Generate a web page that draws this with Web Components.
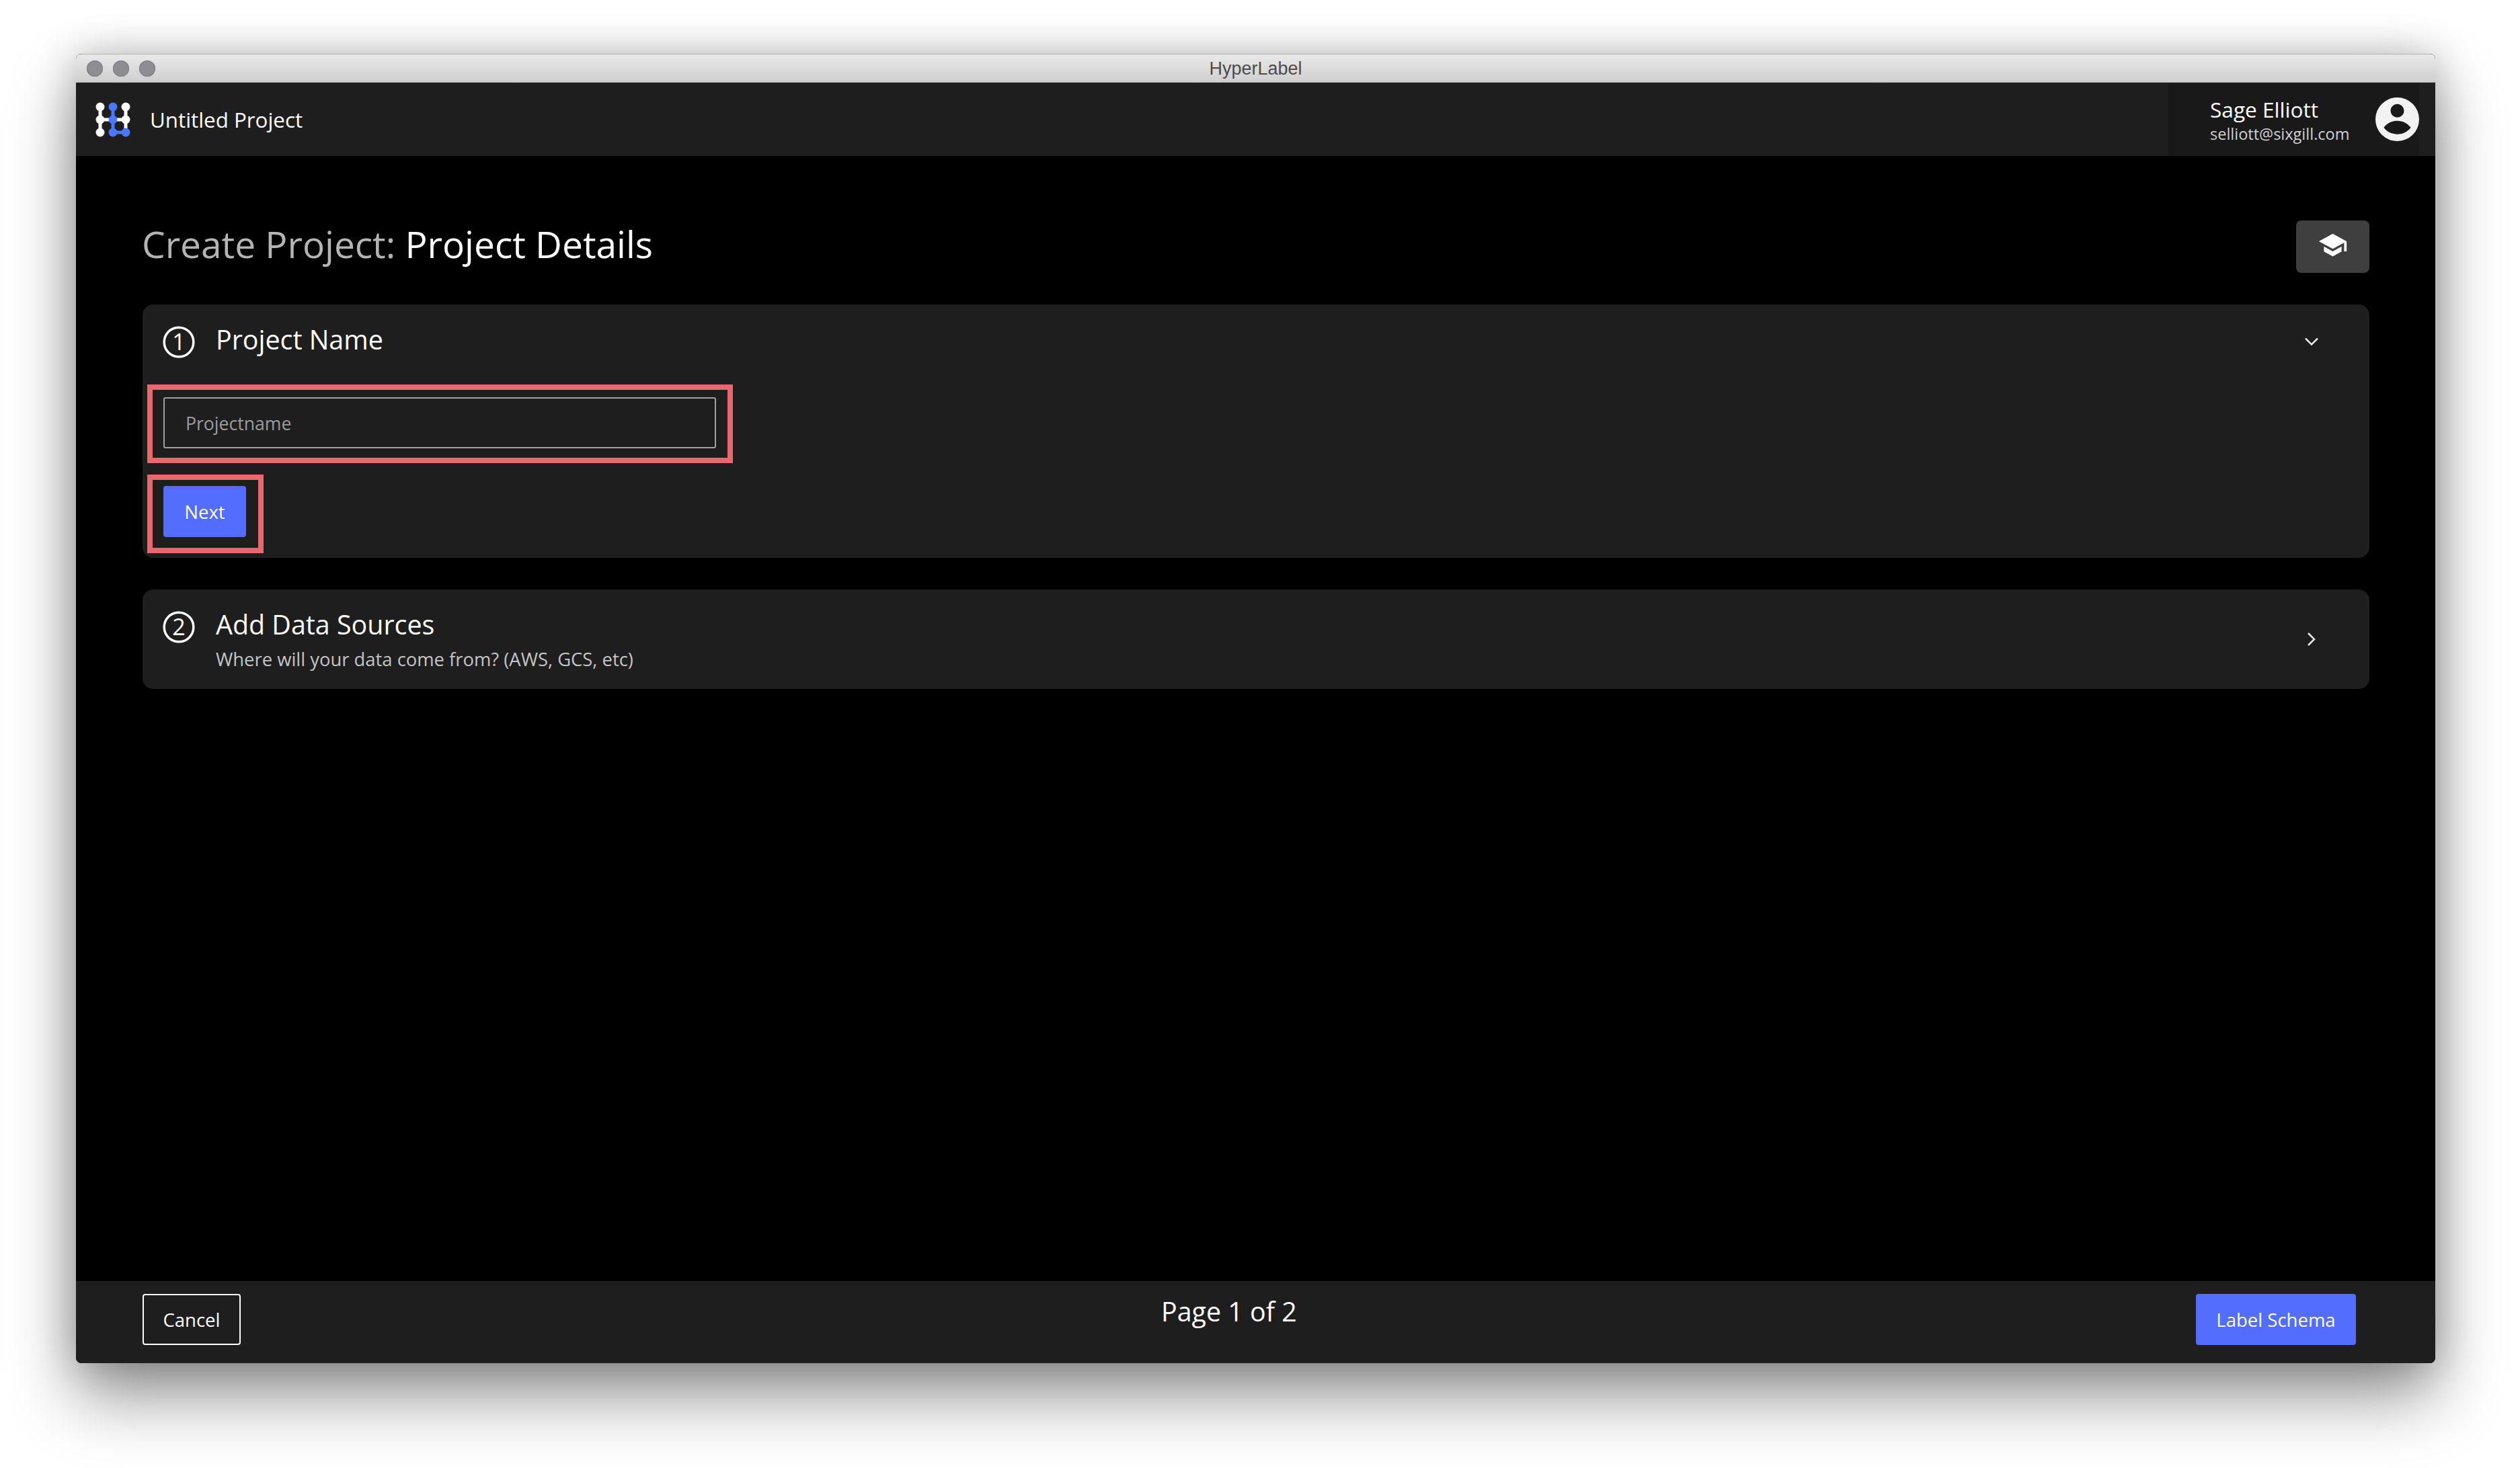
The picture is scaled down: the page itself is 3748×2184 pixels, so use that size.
<!DOCTYPE html>
<html>
<head>
<meta charset="utf-8">
<title>HyperLabel</title>
<style>
  html, body { margin: 0; height: 100%; background: #fff; }
  body { font-family: "Open Sans", "Noto Sans", sans-serif; color: #fff; }
</style>
</head>
<body>
<app-window>
  <title-bar slot="top">HyperLabel</title-bar>
  <app-header slot="top" project="Untitled Project" user="Sage Elliott" email="selliott@sixgill.com"></app-header>
  <page-heading prefix="Create Project:" title="Project Details"></page-heading>
  <step-card step="1" heading="Project Name" open>
    <mark-box pad="11px 17px 14px 16px" style="width:871px">
      <text-field placeholder="Projectname"></text-field>
    </mark-box>
    <mark-box pad="9px 18px 16px 16px" style="width:173px;margin-top:17px">
      <ui-button primary style="width:123px">Next</ui-button>
    </mark-box>
  </step-card>
  <step-card step="2" heading="Add Data Sources" note="Where will your data come from? (AWS, GCS, etc)"></step-card>
  <app-footer slot="bottom" page="Page 1 of 2">
    <ui-button slot="left" style="width:146px">Cancel</ui-button>
    <ui-button slot="right" primary style="width:238px">Label Schema</ui-button>
  </app-footer>
</app-window>

<script>
class AppWindow extends HTMLElement {
  constructor() {
    super();
    this.attachShadow({ mode: "open" });
    this.shadowRoot.innerHTML = `
      <style>
        :host {
          display: flex;
          flex-direction: column;
          box-sizing: border-box;
          width: 3509px;
          height: 1948px;
          margin: 80px 0 0 113px;
          background: #000;
          border-radius: 8px;
          box-shadow: 0 50px 100px rgba(0,0,0,.42), 0 0 60px rgba(0,0,0,.22);
          overflow: hidden;
        }
        main {
          flex: 1;
          display: flex;
          flex-direction: column;
          gap: 47px;
          padding: 96px 98px 0 99px;
        }
      </style>
      <slot name="top"></slot>
      <main><slot></slot></main>
      <slot name="bottom"></slot>
    `;
  }
}

class TitleBar extends HTMLElement {
  constructor() {
    super();
    this.attachShadow({ mode: "open" });
    this.shadowRoot.innerHTML = `
      <style>
        :host {
          display: flex;
          align-items: center;
          position: relative;
          box-sizing: border-box;
          height: 43px;
          padding-left: 16px;
          gap: 15px;
          background: linear-gradient(#e9e9e9, #cfcfcf);
          border-top: 1px solid #b4b4b4;
          border-bottom: 1px solid #a8a8a8;
        }
        i {
          width: 24px;
          height: 24px;
          border-radius: 50%;
          background: #8e8d92;
          box-shadow: inset 0 0 0 1px #7d7c80;
        }
        span {
          position: absolute;
          left: 0;
          right: 0;
          top: 6px;
          text-align: center;
          font: 27px "Liberation Sans", Arial, sans-serif;
          color: #4c4c4c;
        }
      </style>
      <i></i><i></i><i></i>
      <span><slot></slot></span>
    `;
  }
}

class AppHeader extends HTMLElement {
  constructor() {
    super();
    this.attachShadow({ mode: "open" });
    this.shadowRoot.innerHTML = `
      <style>
        :host {
          display: flex;
          align-items: stretch;
          height: 109px;
          background: #1e1e1e;
          padding: 0 24px 0 0;
        }
        .brand {
          flex: 1;
          display: flex;
          align-items: center;
          gap: 26px;
          padding-left: 28px;
          font-size: 31.300px;
        }
        .brand svg { width: 56px; height: 56px; }
        .profile {
          display: flex;
          align-items: center;
          background: #191919;
          padding-left: 62px;
          width: 373px;
          box-sizing: border-box;
        }
        .who { flex: 1; display: flex; flex-direction: column; padding-top: 2px; }
        .name { font-size: 31.600px; line-height: 40px; }
        .mail { font-size: 23.500px; line-height: 32px; color: #d0d0d0; }
        .profile svg { width: 65px; height: 65px; }
      </style>
      <div class="brand">
        <svg viewBox="0 0 56 56">
          <g stroke="#fff" stroke-width="5" fill="#fff">
            <path d="M8 9V47M8 28H46M46 9V47" fill="none"/>
            <circle cx="8" cy="9" r="6.5" stroke="none"/>
            <circle cx="8" cy="28" r="6.5" stroke="none"/>
            <circle cx="8" cy="47" r="6.5" stroke="none"/>
            <circle cx="46" cy="9" r="6.5" stroke="none"/>
            <circle cx="46" cy="28" r="6.5" stroke="none"/>
          </g>
          <g stroke="#4a77ff" stroke-width="5" fill="#4a77ff">
            <path d="M27 9V47H46" fill="none"/>
            <circle cx="27" cy="9" r="6.5" stroke="none"/>
            <circle cx="27" cy="28" r="6.5" stroke="none"/>
            <circle cx="27" cy="47" r="6.5" stroke="none"/>
            <circle cx="46" cy="47" r="6.5" stroke="none"/>
          </g>
        </svg>
        <span class="project"></span>
      </div>
      <div class="profile">
        <div class="who"><span class="name"></span><span class="mail"></span></div>
        <svg viewBox="0 0 24 24">
          <path fill="#f2f2f2" fill-rule="evenodd" d="M12 0a12 12 0 1 0 0 24a12 12 0 0 0 0-24zM12 3.600a3.700 3.700 0 1 1 0 7.400a3.700 3.700 0 0 1 0-7.400zM12 20.200c-3.100 0-5.800-1.500-7.400-3.700C6.200 14.300 8.900 12.800 12 12.800s5.800 1.500 7.400 3.700C17.800 18.700 15.100 20.200 12 20.200z"/>
        </svg>
      </div>
    `;
  }

  connectedCallback() {
    this.shadowRoot.querySelector(".project").textContent = this.getAttribute("project");
    this.shadowRoot.querySelector(".name").textContent = this.getAttribute("user");
    this.shadowRoot.querySelector(".mail").textContent = this.getAttribute("email");
  }
}

class PageHeading extends HTMLElement {
  constructor() {
    super();
    this.attachShadow({ mode: "open" });
    this.shadowRoot.innerHTML = `
      <style>
        :host {
          display: flex;
          align-items: center;
          justify-content: space-between;
          height: 78px;
        }
        h1 { margin: 0 0 9px -1px; font-size: 55px; font-weight: 400; color: #fff; }
        h1 span { color: #b4b4b4; }
        h1 b { font-weight: 400; }
        button {
          width: 109px;
          height: 78px;
          padding: 0 0 6px;
          border: 0;
          border-radius: 8px;
          background: #3f3f3f;
          display: flex;
          align-items: center;
          justify-content: center;
        }
        svg { width: 45px; height: 45px; }
      </style>
      <h1><span class="prefix"></span> <b class="title"></b></h1>
      <button>
        <svg viewBox="0 0 24 24"><path fill="#fff" d="M12 3 1 9l11 6 9-4.910V17h2V9L12 3zM5 13.180v4L12 21l7-3.820v-4L12 17l-7-3.820z"/></svg>
      </button>
    `;
  }

  connectedCallback() {
    this.shadowRoot.querySelector(".prefix").textContent = this.getAttribute("prefix");
    this.shadowRoot.querySelector(".title").textContent = this.getAttribute("title");
  }
}

class StepCard extends HTMLElement {
  constructor() {
    super();
    this.attachShadow({ mode: "open" });
    this.shadowRoot.innerHTML = `
      <style>
        :host {
          display: block;
          background: #1e1e1e;
          border-radius: 16px;
        }
        header {
          display: flex;
          align-items: flex-start;
          gap: 31px;
          padding: 32px 73px 0 30px;
        }
        .badge { width: 48px; height: 48px; flex: none; }
        .badge text { font: 34px "Open Sans", sans-serif; fill: #fff; }
        .text { flex: 1; }
        h2 { margin: -4px 0 0; padding-bottom: 12px; font-size: 39.400px; line-height: 48px; font-weight: 400; }
        p { margin: -2px 0 0; font-size: 27.400px; line-height: 36px; color: #c4c4c4; }
        .chev { width: 26px; height: 26px; flex: none; margin-top: 10px; }
        .body { padding: 31px 0 7px 7px; }
        :host(:not([open])) header { padding-bottom: 26px; }
        :host(:not([open])) .body { display: none; }
        :host(:not([open])) .chev { margin-top: 29px; }
      </style>
      <header>
        <svg class="badge" viewBox="0 0 48 48">
          <circle cx="24" cy="24" r="21.800" fill="none" stroke="#fff" stroke-width="3.500"/>
          <text x="24" y="36" text-anchor="middle" class="num"></text>
        </svg>
        <div class="text"><h2></h2><p></p></div>
        <svg class="chev" viewBox="0 0 26 26"><path class="arrow" fill="none" stroke="#e8e8e8" stroke-width="2.500"/></svg>
      </header>
      <div class="body"><slot></slot></div>
    `;
  }

  connectedCallback() {
    const root = this.shadowRoot;
    root.querySelector(".num").textContent = this.getAttribute("step");
    root.querySelector("h2").textContent = this.getAttribute("heading");
    const note = root.querySelector("p");
    if (this.hasAttribute("note")) note.textContent = this.getAttribute("note");
    else note.remove();
    root.querySelector(".arrow").setAttribute("d", this.hasAttribute("open") ? "M4 8.500l9 9 9-9" : "M8 4l9 9-9 9");
  }
}

class MarkBox extends HTMLElement {
  constructor() {
    super();
    this.attachShadow({ mode: "open" });
    this.shadowRoot.innerHTML = `
      <style>
        :host {
          display: block;
          box-sizing: border-box;
          border: 8px solid #e7696e;
        }
      </style>
      <slot></slot>
    `;
  }

  connectedCallback() {
    this.style.padding = this.getAttribute("pad");
  }
}

class TextField extends HTMLElement {
  constructor() {
    super();
    this.attachShadow({ mode: "open" });
    this.shadowRoot.innerHTML = `
      <style>
        :host { display: block; }
        input {
          display: block;
          box-sizing: border-box;
          width: 100%;
          height: 76px;
          padding: 2px 31px 0;
          background: transparent;
          border: 2px solid #a0a0a0;
          border-radius: 3px;
          font: 26.600px "Open Sans", sans-serif;
          color: #fff;
          outline: none;
        }
        input::placeholder { color: #9c9c9c; opacity: 1; }
      </style>
      <input type="text">
    `;
  }

  connectedCallback() {
    this.shadowRoot.querySelector("input").placeholder = this.getAttribute("placeholder");
  }
}

class UiButton extends HTMLElement {
  constructor() {
    super();
    this.attachShadow({ mode: "open" });
    this.shadowRoot.innerHTML = `
      <style>
        :host {
          display: flex;
          align-items: center;
          justify-content: center;
          box-sizing: border-box;
          height: 76px;
          border: 2px solid #fff;
          border-radius: 4px;
          font-size: 27.500px;
          color: #fff;
        }
        :host([primary]) { background: #536dfe; border-color: #536dfe; }
      </style>
      <slot></slot>
    `;
  }
}

class AppFooter extends HTMLElement {
  constructor() {
    super();
    this.attachShadow({ mode: "open" });
    this.shadowRoot.innerHTML = `
      <style>
        :host {
          display: flex;
          align-items: flex-start;
          justify-content: space-between;
          position: relative;
          box-sizing: border-box;
          height: 122px;
          padding: 19px 118px 0 99px;
          background: #1e1e1e;
        }
        .page {
          position: absolute;
          left: 1614px;
          top: 18px;
          width: 200px;
          text-align: center;
          white-space: nowrap;
          font-size: 39.400px;
        }
      </style>
      <slot name="left"></slot>
      <div class="page"></div>
      <slot name="right"></slot>
    `;
  }

  connectedCallback() {
    this.shadowRoot.querySelector(".page").textContent = this.getAttribute("page");
  }
}

customElements.define("app-window", AppWindow);
customElements.define("title-bar", TitleBar);
customElements.define("app-header", AppHeader);
customElements.define("page-heading", PageHeading);
customElements.define("step-card", StepCard);
customElements.define("mark-box", MarkBox);
customElements.define("text-field", TextField);
customElements.define("ui-button", UiButton);
customElements.define("app-footer", AppFooter);
</script>
</body>
</html>
